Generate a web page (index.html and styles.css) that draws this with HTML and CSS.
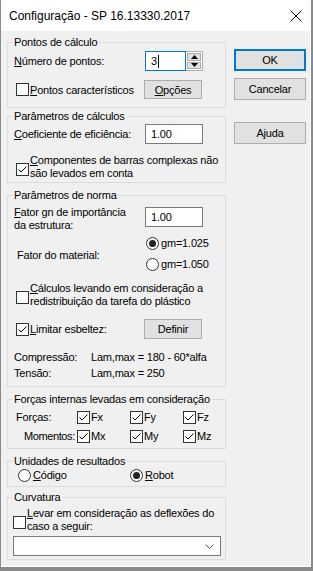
FILE: index.html
```html
<!DOCTYPE html>
<html lang="pt">
<head>
  <meta charset="UTF-8">
  <title>Configuração - SP 16.13330.2017</title>
  <link rel="stylesheet" href="styles.css">
</head>
<body>
  <div class="window">
    <div class="titlebar">
      <span class="title">Configuração - SP 16.13330.2017</span>
      <svg class="close" width="12" height="12" viewBox="0 0 12 12"><path d="M0.5 0.5L11.5 11.5M11.5 0.5L0.5 11.5" stroke="#000" stroke-width="1"/></svg>
    </div>
    <div class="content">
      <div class="left">
        <!-- pontos de calculo -->
        <fieldset class="group g1">
          <legend>Pontos de cálculo</legend>
          <div class="row r-num">
            <span class="lbl"><u>N</u>úmero de pontos:</span>
            <div class="spin">
              <div class="spin-input">3<span class="caret"></span></div>
              <div class="spin-btns">
                <div class="spin-btn"><svg width="7" height="4" viewBox="0 0 7 4"><path d="M3.5 0L7 4H0z" fill="#000"/></svg></div>
                <div class="spin-btn"><svg width="7" height="4" viewBox="0 0 7 4"><path d="M0 0H7L3.5 4z" fill="#000"/></svg></div>
              </div>
            </div>
          </div>
          <div class="row r-pts">
            <span class="check"><span class="box"></span><span><u>P</u>ontos característicos</span></span>
            <span class="btn btn-sm"><u>O</u>pções</span>
          </div>
        </fieldset>

        <!-- parametros de calculos -->
        <fieldset class="group g2">
          <legend>Parâmetros de cálculos</legend>
          <div class="row r-coef">
            <span class="lbl"><u>C</u>oeficiente de eficiência:</span>
            <span class="field">1.00</span>
          </div>
          <div class="check multi r-comp">
            <span class="box on"><svg width="11" height="11" viewBox="0 0 11 11"><path d="M1.5 5.5L4 8L9.5 2.5" fill="none" stroke="#000" stroke-width="1"/></svg></span>
            <span><u>C</u>omponentes de barras complexas não<br>são levados em conta</span>
          </div>
        </fieldset>

        <!-- parametros de norma -->
        <fieldset class="group g3">
          <legend>Parâmetros de norma</legend>
          <div class="row r-gn">
            <span class="lbl two"><u>F</u>ator gn de importância<br>da estrutura:</span>
            <span class="field">1.00</span>
          </div>
          <div class="material">
            <span class="mat-lbl">Fator do material:</span>
            <div class="mat-opts">
              <span class="radio"><span class="dot on"></span>gm=1.025</span>
              <span class="radio"><span class="dot"></span>gm=1.050</span>
            </div>
          </div>
          <div class="check multi r-calc">
            <span class="box"></span>
            <span><u>C</u>álculos levando em consideração a<br>redistribuição da tarefa do plástico</span>
          </div>
          <div class="row r-lim">
            <span class="check"><span class="box on"><svg width="11" height="11" viewBox="0 0 11 11"><path d="M1.5 5.5L4 8L9.5 2.5" fill="none" stroke="#000" stroke-width="1"/></svg></span><span><u>L</u>imitar esbeltez:</span></span>
            <span class="btn btn-sm">Definir</span>
          </div>
          <div class="formula r-comp2"><span class="f-lbl">Compressão:</span><span>Lam,max = 180 - 60*alfa</span></div>
          <div class="formula"><span class="f-lbl">Tensão:</span><span>Lam,max = 250</span></div>
        </fieldset>

        <!-- forcas internas -->
        <fieldset class="group g4">
          <legend>Forças internas levadas em consideração</legend>
          <div class="forces r-fx">
            <span class="f-name">Forças:</span>
            <span class="check fc"><span class="box on"><svg width="11" height="11" viewBox="0 0 11 11"><path d="M1.5 5.5L4 8L9.5 2.5" fill="none" stroke="#000" stroke-width="1"/></svg></span>Fx</span>
            <span class="check fc"><span class="box on"><svg width="11" height="11" viewBox="0 0 11 11"><path d="M1.5 5.5L4 8L9.5 2.5" fill="none" stroke="#000" stroke-width="1"/></svg></span>Fy</span>
            <span class="check fc"><span class="box on"><svg width="11" height="11" viewBox="0 0 11 11"><path d="M1.5 5.5L4 8L9.5 2.5" fill="none" stroke="#000" stroke-width="1"/></svg></span>Fz</span>
          </div>
          <div class="forces r-mx">
            <span class="f-name moments">Momentos:</span>
            <span class="check fc"><span class="box on"><svg width="11" height="11" viewBox="0 0 11 11"><path d="M1.5 5.5L4 8L9.5 2.5" fill="none" stroke="#000" stroke-width="1"/></svg></span>Mx</span>
            <span class="check fc"><span class="box on"><svg width="11" height="11" viewBox="0 0 11 11"><path d="M1.5 5.5L4 8L9.5 2.5" fill="none" stroke="#000" stroke-width="1"/></svg></span>My</span>
            <span class="check fc"><span class="box on"><svg width="11" height="11" viewBox="0 0 11 11"><path d="M1.5 5.5L4 8L9.5 2.5" fill="none" stroke="#000" stroke-width="1"/></svg></span>Mz</span>
          </div>
        </fieldset>

        <!-- unidades -->
        <fieldset class="group g5">
          <legend>Unidades de resultados</legend>
          <div class="units">
            <span class="radio unit"><span class="dot"></span><span><u>C</u>ódigo</span></span>
            <span class="radio unit"><span class="dot on"></span><span><u>R</u>obot</span></span>
          </div>
        </fieldset>

        <!-- curvatura -->
        <fieldset class="group g6">
          <legend>Curvatura</legend>
          <div class="check multi r-lev">
            <span class="box"></span>
            <span><u>L</u>evar em consideração as deflexões do<br>caso a seguir:</span>
          </div>
          <div class="select">
            <svg width="9" height="5" viewBox="0 0 9 5"><path d="M0.5 0.5L4.5 4.5L8.5 0.5" fill="none" stroke="#555" stroke-width="1"/></svg>
          </div>
        </fieldset>
      </div>

      <div class="right">
        <span class="btn btn-main default">OK</span>
        <span class="btn btn-main cancel">Cancelar</span>
        <span class="btn btn-main help">Ajuda</span>
      </div>
    </div>
  </div>
</body>
</html>
```

FILE: styles.css
```css
body {
  margin: 0;
  font-family: 'Liberation Sans', Arial, sans-serif;
  font-size: 11px;
  letter-spacing: -0.2px;
  color: #000;
  background: #f0f0f0;
}
.window {
  width: 313px;
  height: 571px;
  box-sizing: border-box;
  background: #f0f0f0;
  border-left: 1px solid #8a8a8a;
  border-right: 2px solid #8a8a8a;
  border-bottom: 4px solid #8a8a8a;
  box-shadow: inset -1px -1px 0 #fff;
  display: flex;
  flex-direction: column;
}
.titlebar {
  height: 31px;
  flex: none;
  background: #fff;
  display: flex;
  align-items: center;
  justify-content: space-between;
  padding: 0 9px 0 8px;
}
.title {
  font-size: 12px;
  letter-spacing: 0;
}
.close {
  margin-top: 1px;
}
.content {
  display: flex;
  gap: 8px;
  padding: 4px 0 0 6px;
}
.left {
  width: 219px;
}
.right {
  display: flex;
  flex-direction: column;
  padding-top: 14px;
  width: 72px;
}

/* group boxes */
.group {
  margin: 0;
  padding: 0 0 0 6px;
  border: 1px solid #dcdcdc;
  min-width: 0;
}
.group legend {
  padding: 0 2px;
  margin-left: -2px;
  line-height: 14px;
  height: 14px;
  white-space: nowrap;
}
.g1 { margin-top: 0; padding-bottom: 8px; }
.g2 { margin-top: 1px; padding-bottom: 2px; }
.g3 { margin-top: 5px; padding-bottom: 5px; }
.g4 { margin-top: 5px; padding-bottom: 3px; }
.g5 { margin-top: 5px; padding-bottom: 4px; }
.g6 { margin-top: 3px; padding-bottom: 3px; }

.row {
  display: flex;
  align-items: center;
  white-space: nowrap;
}
.lbl {
  width: 131px;
  flex: none;
}
.lbl.two {
  line-height: 13px;
}
.r-num { margin-top: 2px; height: 20px; }
.r-pts { margin-top: 9px; height: 19px; }
.r-coef { margin-top: 1px; height: 20px; }
.r-gn { margin-top: 4px; height: 26px; align-items: flex-start; }
.r-gn .field { margin-top: 1px; }
.r-lim { margin-top: 11px; height: 20px; }

.field {
  width: 58px;
  height: 20px;
  box-sizing: border-box;
  background: #fff;
  border: 1px solid #7a7a7a;
  padding-left: 5px;
  line-height: 18px;
}

/* spin control */
.spin {
  display: flex;
  height: 20px;
}
.spin-input {
  width: 41px;
  box-sizing: border-box;
  background: #fff;
  border: 1px solid #0078d7;
  padding-left: 5px;
  line-height: 18px;
  display: flex;
  align-items: center;
}
.caret {
  display: inline-block;
  width: 1px;
  height: 13px;
  background: #000;
  margin-left: 1px;
}
.spin-btns {
  width: 17px;
  display: flex;
  flex-direction: column;
  box-sizing: border-box;
  border: 1px solid #adadad;
  border-left: none;
  background: #fff;
  padding: 1px;
  gap: 1px;
}
.spin-btn {
  flex: 1;
  background: #e1e1e1;
  border: 1px solid #adadad;
  display: flex;
  align-items: center;
  justify-content: center;
}
.spin-btn svg {
  display: block;
}

/* buttons */
.btn {
  display: flex;
  align-items: center;
  justify-content: center;
  box-sizing: border-box;
  background: #e1e1e1;
  border: 1px solid #adadad;
  flex: none;
}
.btn-sm {
  width: 58px;
  height: 20px;
  margin-left: auto;
  margin-right: 23px;
}
.r-pts .btn-sm {
  height: 19px;
}
.btn-main {
  width: 72px;
  height: 22px;
}
.default {
  border-color: #0078d7;
  box-shadow: inset 0 0 0 1px #0078d7;
}
.cancel { margin-top: 7px; }
.help { margin-top: 22px; }

/* checkboxes and radios */
.check {
  display: flex;
  align-items: center;
  white-space: nowrap;
}
.box {
  width: 13px;
  height: 13px;
  box-sizing: border-box;
  border: 1px solid #333;
  background: #fff;
  flex: none;
  margin-left: 2px;
  margin-right: 1px;
  display: flex;
  align-items: center;
  justify-content: center;
}
.box svg {
  display: block;
}
.multi {
  line-height: 13px;
}
.multi .box {
  margin-top: 5px;
}
.r-comp { margin-top: 10px; }
.r-calc { margin-top: 10px; }
.r-lev { margin-top: 3px; margin-left: -3px; }

.radio {
  display: flex;
  align-items: center;
  height: 16px;
  white-space: nowrap;
}
.dot {
  width: 13px;
  height: 13px;
  box-sizing: border-box;
  border: 1px solid #333;
  border-radius: 50%;
  background: #fff;
  margin-right: 2px;
  flex: none;
  display: flex;
  align-items: center;
  justify-content: center;
}
.dot.on::after {
  content: "";
  width: 7px;
  height: 7px;
  border-radius: 50%;
  background: #222;
}

/* fator do material */
.material {
  display: flex;
  margin-top: 3px;
}
.mat-lbl {
  width: 129px;
  padding-left: 3px;
  padding-top: 3px;
  display: flex;
  align-items: center;
}
.mat-opts {
  display: flex;
  flex-direction: column;
  gap: 5px;
}

.formula {
  display: flex;
  height: 16px;
  line-height: 16px;
  white-space: nowrap;
}
.r-comp2 { margin-top: 10px; }
.f-lbl {
  width: 77px;
}

/* forcas internas */
.forces {
  display: flex;
  align-items: center;
  height: 18px;
}
.r-fx { margin-top: 2px; }
.r-mx { margin-top: 1px; }
.f-name {
  width: 63px;
  flex: none;
  padding-left: 2px;
  box-sizing: border-box;
  white-space: nowrap;
}
.f-name.moments {
  padding-left: 10px;
  letter-spacing: -0.4px;
}
.fc {
  width: 53px;
  flex: none;
}
.fc .box {
  margin-left: 0;
}

/* unidades */
.units {
  display: flex;
  height: 14px;
  align-items: center;
}
.unit {
  width: 112px;
  flex: none;
  margin-left: 4px;
}
.unit + .unit {
  margin-left: 0;
  width: 80px;
}

/* curvatura */
.select {
  margin-top: 3px;
  margin-left: -1px;
  width: 208px;
  height: 20px;
  box-sizing: border-box;
  background: #fff;
  border: 1px solid #7a7a7a;
  display: flex;
  align-items: center;
  justify-content: flex-end;
  padding-right: 6px;
}
```
